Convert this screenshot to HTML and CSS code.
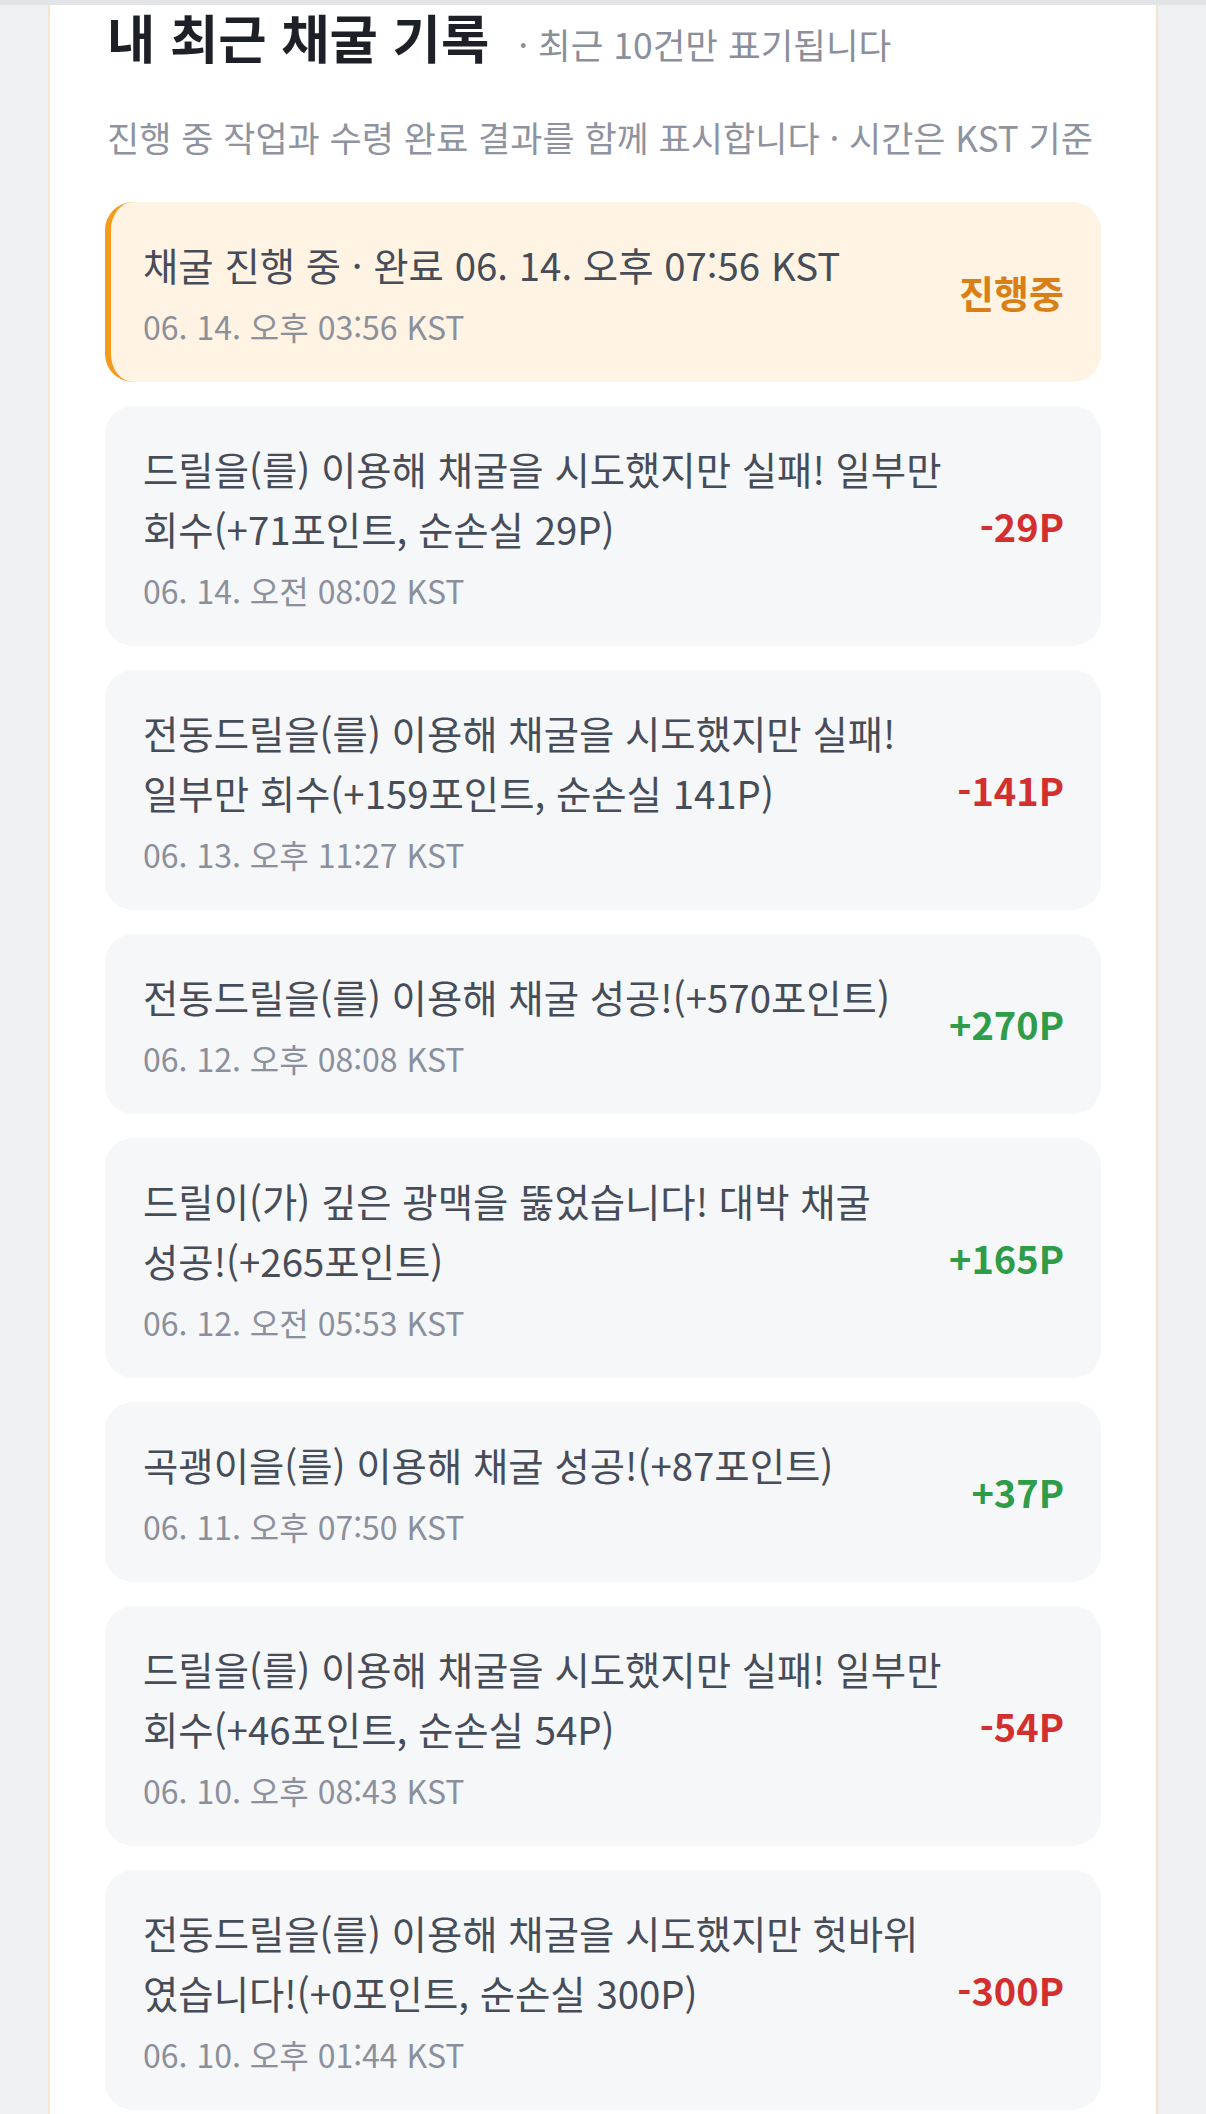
FILE: index.html
```html
<!DOCTYPE html>
<html lang="ko">
<head>
    <meta charset="UTF-8">
    <meta name="viewport" content="width=device-width, initial-scale=1.0">
    <title>내 최근 채굴 기록</title>
    <link rel="stylesheet" href="styles.css">
</head>
<body>

    <div class="topbar"></div>

    <div class="panel">
        <div class="head">
            <h2>내 최근 채굴 기록</h2>
            <span class="limit">· 최근 10건만 표기됩니다</span>
        </div>
        <p class="desc">진행 중 작업과 수령 완료 결과를 함께 표시합니다 · 시간은 KST 기준</p>

        <div class="log-list">
            <div class="log pending">
                <div class="log-body">
                    <div class="log-text">채굴 진행 중 · 완료 06. 14. 오후 07:56 KST</div>
                    <div class="log-time">06. 14. 오후 03:56 KST</div>
                </div>
                <div class="log-amount wait">진행중</div>
            </div>
            <div class="log">
                <div class="log-body">
                    <div class="log-text">드릴을(를) 이용해 채굴을 시도했지만 실패! 일부만 회수(+71포인트, 순손실 29P)</div>
                    <div class="log-time">06. 14. 오전 08:02 KST</div>
                </div>
                <div class="log-amount minus">-29P</div>
            </div>
            <div class="log">
                <div class="log-body">
                    <div class="log-text">전동드릴을(를) 이용해 채굴을 시도했지만 실패! 일부만 회수(+159포인트, 순손실 141P)</div>
                    <div class="log-time">06. 13. 오후 11:27 KST</div>
                </div>
                <div class="log-amount minus">-141P</div>
            </div>
            <div class="log">
                <div class="log-body">
                    <div class="log-text">전동드릴을(를) 이용해 채굴 성공!(+570포인트)</div>
                    <div class="log-time">06. 12. 오후 08:08 KST</div>
                </div>
                <div class="log-amount plus">+270P</div>
            </div>
            <div class="log">
                <div class="log-body">
                    <div class="log-text">드릴이(가) 깊은 광맥을 뚫었습니다! 대박 채굴 성공!(+265포인트)</div>
                    <div class="log-time">06. 12. 오전 05:53 KST</div>
                </div>
                <div class="log-amount plus">+165P</div>
            </div>
            <div class="log">
                <div class="log-body">
                    <div class="log-text">곡괭이을(를) 이용해 채굴 성공!(+87포인트)</div>
                    <div class="log-time">06. 11. 오후 07:50 KST</div>
                </div>
                <div class="log-amount plus">+37P</div>
            </div>
            <div class="log">
                <div class="log-body">
                    <div class="log-text">드릴을(를) 이용해 채굴을 시도했지만 실패! 일부만 회수(+46포인트, 순손실 54P)</div>
                    <div class="log-time">06. 10. 오후 08:43 KST</div>
                </div>
                <div class="log-amount minus">-54P</div>
            </div>
            <div class="log">
                <div class="log-body">
                    <div class="log-text">전동드릴을(를) 이용해 채굴을 시도했지만 헛바위였습니다!(+0포인트, 순손실 300P)</div>
                    <div class="log-time">06. 10. 오후 01:44 KST</div>
                </div>
                <div class="log-amount minus">-300P</div>
            </div>
        </div>
    </div>

</body>
</html>
```

FILE: styles.css
```css
body {
    font-family: "Noto Sans CJK KR", "Noto Sans", sans-serif;
    margin: 0;
    background-color: #eff0f3;
}
.topbar {
    height: 5px;
    background-color: #e3e4e8;
}
.panel {
    box-sizing: border-box;
    width: 1110px;
    margin-left: 48px;
    padding: 0 55px 40px;
    background-color: #ffffff;
    border-left: 2px solid #f6e5cd;
    border-right: 2px solid #f6e5cd;
}
.head {
    display: flex;
    align-items: baseline;
    padding-left: 2px;
}
.head h2 {
    margin: 0;
    font-size: 52.5px;
    line-height: 1.2;
    font-weight: 700;
    color: #1e2027;
}
.limit {
    margin-left: 29px;
    font-size: 35.5px;
    color: #8a8f9b;
}
.desc {
    margin: 42px 0 0;
    padding-left: 2px;
    font-size: 35px;
    line-height: 1.5;
    color: #8e939f;
}
.log-list {
    display: flex;
    flex-direction: column;
    gap: 24px;
    margin-top: 38px;
}
.log {
    display: flex;
    align-items: center;
    gap: 34px;
    padding: 32px 37px 32px 38px;
    background-color: #f6f7f9;
    border-radius: 28px;
}
.log.pending {
    padding-left: 32px;
    background-color: #fff3e3;
    border-left: 6px solid #f29b1d;
}
.log-body {
    flex: 1;
    min-width: 0;
}
.log-text {
    font-size: 38.4px;
    line-height: 60px;
    color: #464c58;
}
.log-time {
    margin-top: 8px;
    font-size: 32px;
    line-height: 1.5;
    color: #8b909c;
}
.log-amount {
    flex-shrink: 0;
    font-size: 38px;
    font-weight: 700;
}
.log-amount.minus {
    color: #d32f2f;
}
.log-amount.plus {
    color: #2e9c48;
}
.log-amount.wait {
    color: #d97f17;
}
```
